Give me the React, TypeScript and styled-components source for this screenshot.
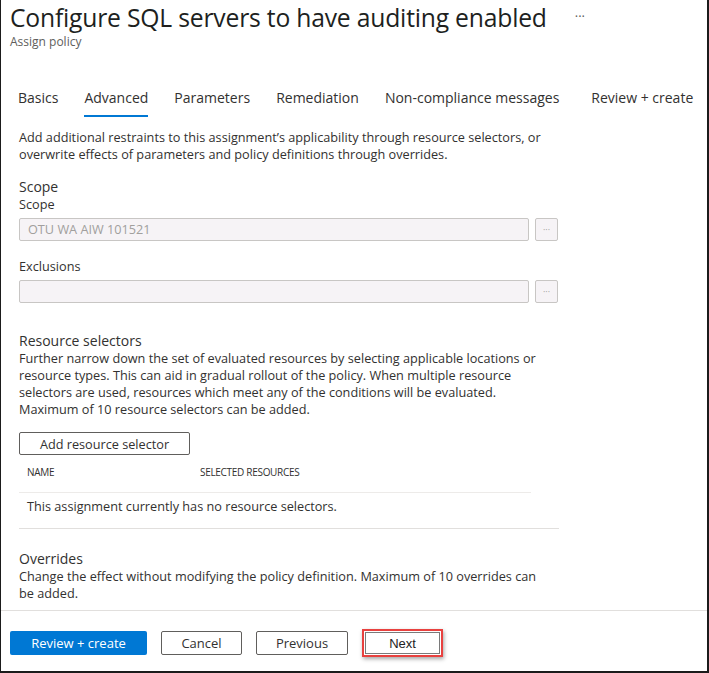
import styled, { createGlobalStyle } from 'styled-components';

const GlobalStyle = createGlobalStyle`
  html, body {
    margin: 0;
    padding: 0;
    background: #ffffff;
  }
  body {
    font-family: "Open Sans", "Noto Sans", sans-serif;
    color: #323130;
  }
`;

const tabs = ['Basics', 'Advanced', 'Parameters', 'Remediation', 'Non-compliance messages', 'Review + create'];

function App() {
  return (
    <>
      <GlobalStyle />
      <Frame>
        <Header>
          <TitleRow>
            <Title>Configure SQL servers to have auditing enabled</Title>
            <More>···</More>
          </TitleRow>
          <Subtitle>Assign policy</Subtitle>
        </Header>

        <TabBar>
          {tabs.map((t, i) => (
            <Tab key={t} $active={t === 'Advanced'} $last={i === tabs.length - 1}>{t}</Tab>
          ))}
        </TabBar>

        <Body>
          <Text>
            Add additional restraints to this assignment’s applicability through resource selectors, or
            overwrite effects of parameters and policy definitions through overrides.
          </Text>

          <Section $top={15}>
            <SectionTitle>Scope</SectionTitle>
            <Label>Scope</Label>
            <FieldRow>
              <Field>OTU WA AIW 101521</Field>
              <EllipsisButton>···</EllipsisButton>
            </FieldRow>
            <Label $spaced>Exclusions</Label>
            <FieldRow>
              <Field />
              <EllipsisButton>···</EllipsisButton>
            </FieldRow>
          </Section>

          <Section $top={29}>
            <SectionTitle>Resource selectors</SectionTitle>
            <Text>
              Further narrow down the set of evaluated resources by selecting applicable locations or
              resource types. This can aid in gradual rollout of the policy. When multiple resource
              selectors are used, resources which meet any of the conditions will be evaluated.
              Maximum of 10 resource selectors can be added.
            </Text>
            <OutlineButton>Add resource selector</OutlineButton>
            <Table>
              <HeadRow>
                <HeadCell $w={173}>Name</HeadCell>
                <HeadCell>Selected resources</HeadCell>
              </HeadRow>
              <EmptyRow>This assignment currently has no resource selectors.</EmptyRow>
            </Table>
            <Divider />
          </Section>

          <Section $top={21}>
            <SectionTitle>Overrides</SectionTitle>
            <Text>
              Change the effect without modifying the policy definition. Maximum of 10 overrides can
              be added.
            </Text>
          </Section>
        </Body>

        <Footer>
          <PrimaryButton>Review + create</PrimaryButton>
          <FooterButton $w={81}>Cancel</FooterButton>
          <FooterButton $w={92}>Previous</FooterButton>
          <Highlight>
            <NextButton>Next</NextButton>
          </Highlight>
        </Footer>
      </Frame>
    </>
  );
}

export default App;

const Frame = styled.div`
  box-sizing: border-box;
  width: 709px;
  height: 673px;
  border-left: 1px solid #1b1b1b;
  border-right: 2px solid #1b1b1b;
  border-bottom: 2px solid #1b1b1b;
  display: flex;
  flex-direction: column;
  overflow: hidden;
  background: #fff;
`;

const Header = styled.div`
  padding: 1px 0 0 9px;
`;

const TitleRow = styled.div`
  display: flex;
  align-items: center;
  gap: 28px;
`;

const Title = styled.h1`
  margin: 0;
  font-size: 24.7px;
  font-weight: 400;
  line-height: 33px;
  color: #201f1e;
  letter-spacing: -0.2px;
  white-space: nowrap;
`;

const More = styled.span`
  font-size: 13px;
  color: #605e5c;
  margin-top: -4px;
`;

const Subtitle = styled.div`
  font-size: 12px;
  line-height: 16px;
  color: #605e5c;
`;

const TabBar = styled.div`
  display: flex;
  gap: 26px;
  padding: 38px 0 0 17px;
`;

const Tab = styled.div<{ $active?: boolean; $last?: boolean }>`
  font-size: 14px;
  line-height: 20px;
  color: #323130;
  padding-bottom: 7px;
  margin-left: ${(p) => (p.$last ? 6 : 0)}px;
  border-bottom: 2px solid ${(p) => (p.$active ? '#0078d4' : 'transparent')};
  white-space: nowrap;
`;

const Body = styled.div`
  flex: 1;
  padding: 12px 0 0 18px;
  width: 541px;
`;

const Text = styled.p`
  margin: 0;
  max-width: 530px;
  font-size: 12.7px;
  line-height: 17px;
  color: #323130;
`;

const Section = styled.div<{ $top: number }>`
  margin-top: ${(p) => p.$top}px;
`;

const SectionTitle = styled.div`
  font-size: 14px;
  line-height: 18px;
  color: #323130;
`;

const Label = styled.div<{ $spaced?: boolean }>`
  font-size: 12.7px;
  line-height: 17px;
  margin-top: ${(p) => (p.$spaced ? 17 : 0)}px;
  margin-bottom: 5px;
  color: #323130;
`;

const FieldRow = styled.div`
  display: flex;
  gap: 6px;
  align-items: center;
`;

const Field = styled.div`
  box-sizing: border-box;
  width: 510px;
  height: 23px;
  border: 1px solid #c8c6c4;
  border-radius: 2px;
  background: #f6f3f6;
  padding: 0 8px;
  font-size: 12.7px;
  line-height: 21px;
  color: #a19f9d;
`;

const EllipsisButton = styled.div`
  box-sizing: border-box;
  width: 23px;
  height: 23px;
  border: 1px solid #c8c6c4;
  border-radius: 2px;
  background: #f6f3f6;
  font-size: 9px;
  color: #a19f9d;
  text-align: center;
  line-height: 21px;
`;

const OutlineButton = styled.button`
  box-sizing: border-box;
  margin-top: 14px;
  width: 171px;
  height: 23px;
  border: 1px solid #605e5c;
  border-radius: 2px;
  background: #fff;
  font-family: inherit;
  font-size: 12.7px;
  color: #323130;
  padding: 0;
  display: block;
`;

const Table = styled.div`
  width: 512px;
`;

const HeadRow = styled.div`
  display: flex;
  padding: 10px 8px 13px;
  line-height: 14px;
  border-bottom: 1px solid #edebe9;
`;

const HeadCell = styled.div<{ $w?: number }>`
  width: ${(p) => (p.$w ? `${p.$w}px` : 'auto')};
  font-size: 10px;
  text-transform: uppercase;
  letter-spacing: -0.3px;
  color: #323130;
`;

const EmptyRow = styled.div`
  padding: 6px 8px 0;
  line-height: 14px;
  font-size: 12.7px;
  color: #323130;
`;

const Divider = styled.div`
  width: 540px;
  height: 1px;
  background: #e1dfdd;
  margin-top: 15px;
`;

const Footer = styled.div`
  border-top: 1px solid #e1dfdd;
  height: 61px;
  flex-shrink: 0;
  box-sizing: border-box;
  display: flex;
  align-items: flex-start;
  gap: 14px;
  padding: 20px 0 0 9px;
`;

const PrimaryButton = styled.button`
  box-sizing: border-box;
  width: 137px;
  height: 24px;
  border: none;
  border-radius: 2px;
  background: #0078d4;
  color: #fff;
  font-family: inherit;
  font-size: 13px;
  padding: 0;
`;

const FooterButton = styled.button<{ $w: number }>`
  box-sizing: border-box;
  width: ${(p) => p.$w}px;
  height: 24px;
  border: 1px solid #605e5c;
  border-radius: 2px;
  background: #fff;
  color: #323130;
  font-family: inherit;
  font-size: 13px;
  padding: 0;
`;

const Highlight = styled.div`
  box-sizing: border-box;
  margin-top: -2px;
  width: 81px;
  height: 28px;
  border: 2px solid #e8413f;
  box-shadow: 1px 2px 4px rgba(0, 0, 0, 0.35);
  padding: 1px;
  display: flex;
`;

const NextButton = styled.button`
  box-sizing: border-box;
  flex: 1;
  border: 1px solid #7a7a7a;
  background: #fff;
  color: #222;
  font-family: "Liberation Sans", Arial, sans-serif;
  font-size: 13px;
  padding: 0;
`;
